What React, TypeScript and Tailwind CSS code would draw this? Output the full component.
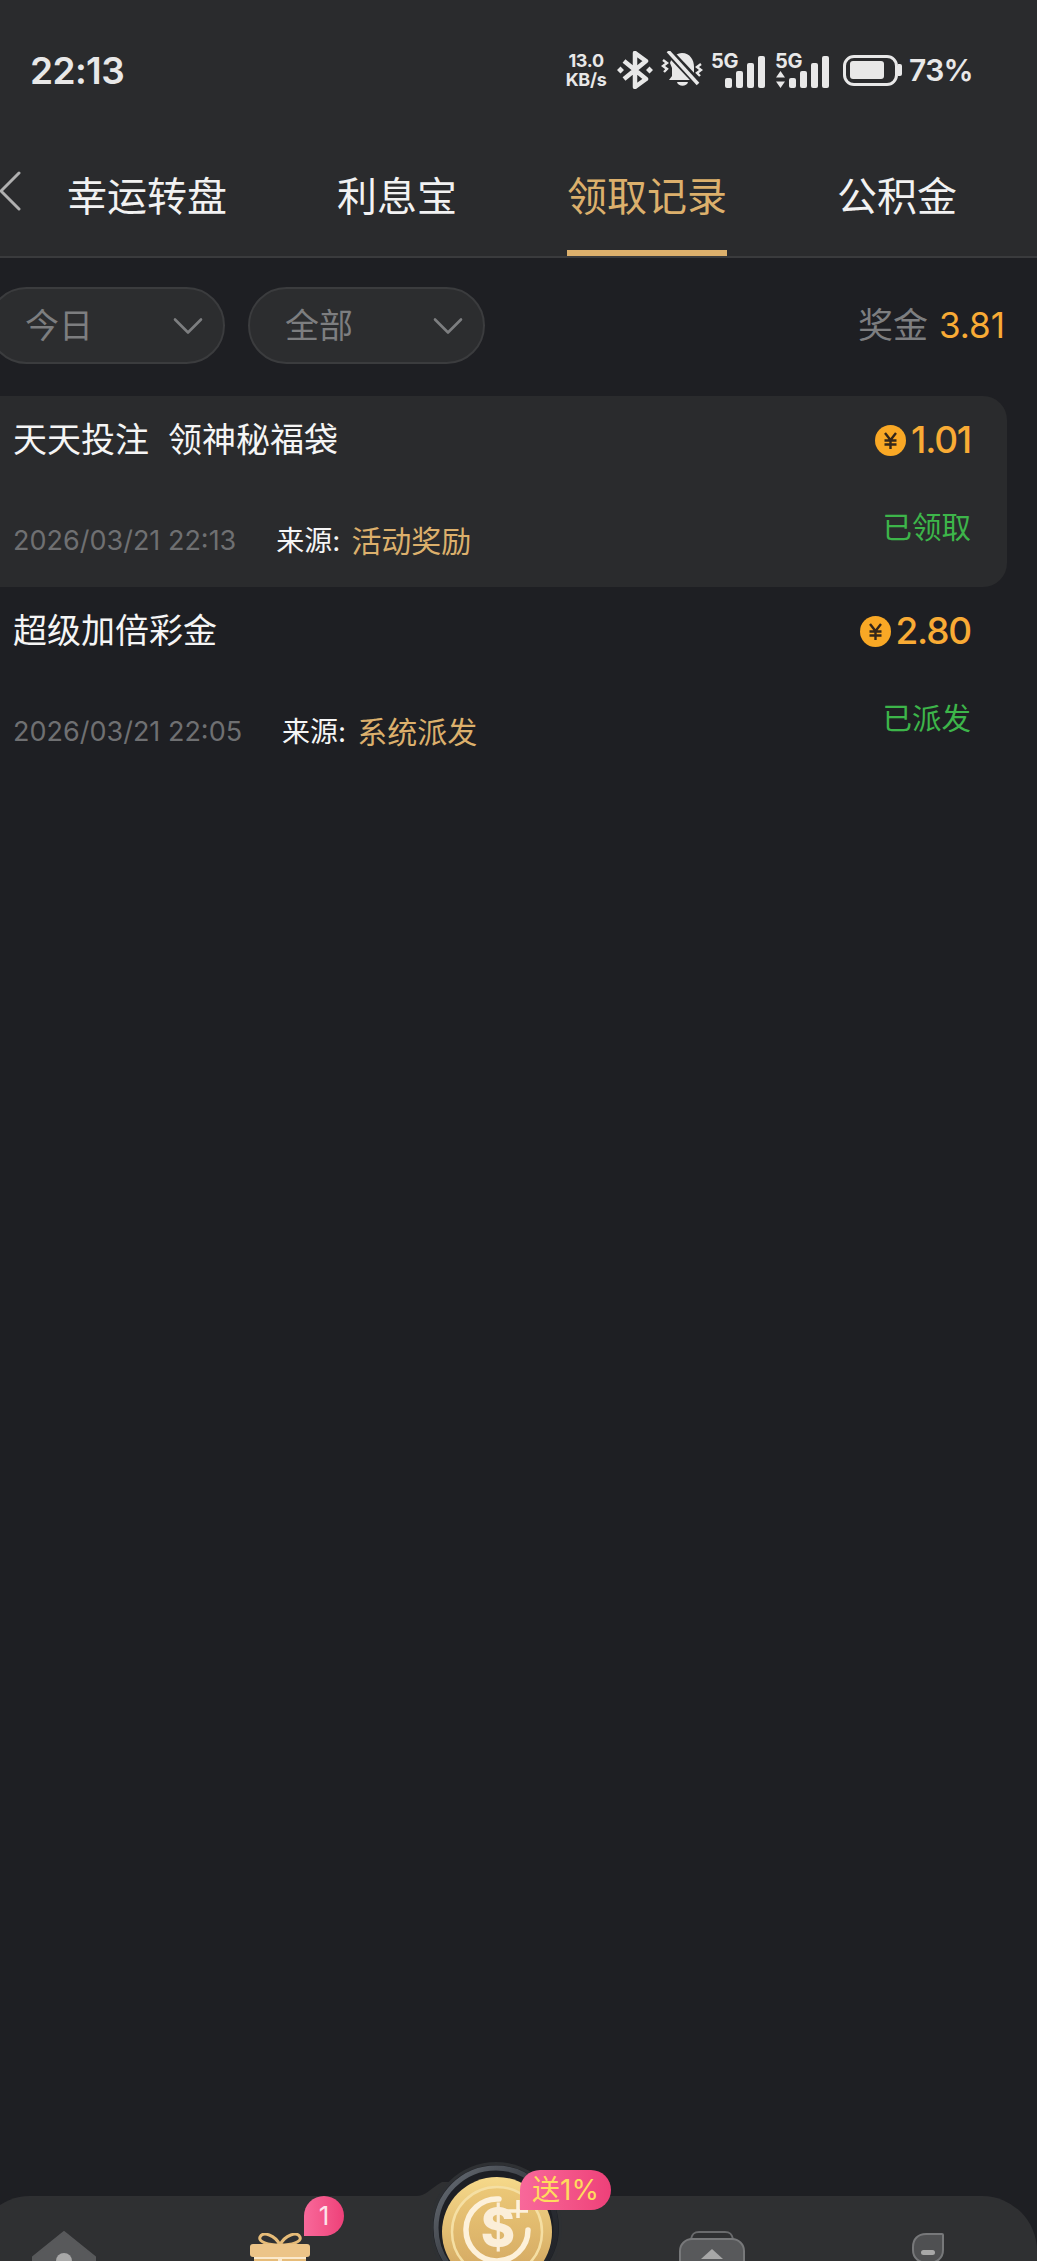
import { ChevronLeft, ChevronDown } from "lucide-react";

const tabs = ["幸运转盘", "利息宝", "领取记录", "公积金"];

const records = [
  {
    title: "天天投注  领神秘福袋",
    amount: "1.01",
    time: "2026/03/21 22:13",
    source: "活动奖励",
    status: "已领取",
    active: true,
  },
  {
    title: "超级加倍彩金",
    amount: "2.80",
    time: "2026/03/21 22:05",
    source: "系统派发",
    status: "已派发",
    active: false,
  },
];

function Bars({ arrows }: { arrows?: boolean }) {
  return (
    <div className="relative h-[35px] w-[54px]">
      <span className="absolute left-0 top-[-4px] text-[20px] leading-[24px] font-bold tracking-[-0.5px] text-[#e8e8e8]">5G</span>
      {arrows && (
        <svg width="9" height="17" viewBox="0 0 9 17" className="absolute left-[1px] bottom-0">
          <path d="M4.5 0L9 6.500H0zM4.5 17L0 10.500h9z" fill="#e8e8e8" />
        </svg>
      )}
      <div className="absolute bottom-0 right-0 flex items-end gap-[4px]">
        <div className="h-[10px] w-[7px] rounded-[2px] bg-[#e8e8e8]" />
        <div className="h-[17px] w-[7px] rounded-[2px] bg-[#e8e8e8]" />
        <div className="h-[25px] w-[7px] rounded-[2px] bg-[#e8e8e8]" />
        <div className="h-[32px] w-[7px] rounded-[2px] bg-[#e8e8e8]" />
      </div>
    </div>
  );
}

function StatusBar() {
  return (
    <div className="flex h-[100px] items-center justify-between pl-[30px] pr-[64px] pt-[40px] text-[#e8e8e8]">
      <span className="text-[37px] font-semibold leading-none tracking-[-0.6px]">22:13</span>
      <div className="flex items-center">
        <div className="flex w-[46px] flex-col items-center text-[18px] font-bold leading-[19px] tracking-[-0.3px]">
          <span>13.0</span>
          <span>KB/s</span>
        </div>
        <svg width="36" height="38" viewBox="0 0 36 38" className="ml-[8px]">
          <path d="M7 10l22 18-11 8V2l11 8-22 18" fill="none" stroke="#e8e8e8" strokeWidth="4.5" strokeLinejoin="round" />
          <path d="M3.5 15.500l3.500 3.500-3.500 3.500L0 19zM32.500 15.500l3.500 3.500-3.500 3.500L29 19z" fill="#e8e8e8" />
        </svg>
        <svg width="42" height="38" viewBox="0 0 42 38" className="ml-[8px]">
          <path d="M9 12c2-6 7-10 12-10 8 0 12 7 12 14v9l3 4H8l3-4v-8z" fill="#e8e8e8" />
          <path d="M16 31h11c-1 5-10 5-11 0z" fill="#e8e8e8" />
          <path d="M7 0l32 34" stroke="#2a2b2d" strokeWidth="8" />
          <path d="M7 0l30 33" stroke="#e8e8e8" strokeWidth="3.500" />
          <path d="M2 9l4 3-4 3 4 3-3 3M40 13l-4 3 4 3-4 3 3 3" fill="none" stroke="#e8e8e8" strokeWidth="2.400" />
        </svg>
        <div className="ml-[8px]">
          <Bars />
        </div>
        <div className="ml-[10px]">
          <Bars arrows />
        </div>
        <div className="ml-[14px] flex items-center">
          <div className="flex h-[31px] w-[55px] items-center rounded-[11px] border-[3px] border-[#e8e8e8] px-[4px]">
            <div className="h-[18px] w-[34px] rounded-[3px] bg-[#e8e8e8]" />
          </div>
          <div className="h-[12px] w-[4px] rounded-r-[2px] bg-[#e8e8e8]" />
        </div>
        <span className="ml-[7px] text-[30px] font-semibold leading-none tracking-[-0.7px]">73%</span>
      </div>
    </div>
  );
}

function Header() {
  return (
    <div className="border-b-2 border-[#3a3b3d] bg-[#2a2b2d]">
      <StatusBar />
      <div className="relative flex h-[156px] pl-[22px] pt-[76px]">
        <ChevronLeft className="absolute left-[-26px] top-[55px] h-[72px] w-[72px] text-[#b0b0b0]" strokeWidth={1} />
        {tabs.map((tab) => (
          <div key={tab} className="flex w-[250px] justify-center">
            <div
              className={`h-[80px] border-b-[6px] text-[40px] leading-[42px] ${
                tab === "领取记录" ? "border-[#dcb06c] text-[#dcb06c]" : "border-transparent text-[#f2f2f2]"
              }`}
            >
              {tab}
            </div>
          </div>
        ))}
      </div>
    </div>
  );
}

function Filter({ label }: { label: string }) {
  return (
    <div className="flex h-[77px] w-[237px] items-center justify-between rounded-full border-2 border-[#3b3c3e] bg-[#2c2d2f] pl-[35px] pr-[9px] text-[34px] text-[#7d7e80]">
      <span>{label}</span>
      <ChevronDown className="h-[52px] w-[52px] text-[#7d7e80]" strokeWidth={1.200} />
    </div>
  );
}

function Coin() {
  return (
    <svg width="31" height="31" viewBox="0 0 31 31">
      <circle cx="15.500" cy="15.500" r="15.500" fill="#f9a825" />
      <path d="M10 8l5.500 7 5.500-7M9.500 15.500h12M9.500 19.500h12M15.500 15v9" fill="none" stroke="#33261a" strokeWidth="2.400" />
    </svg>
  );
}

function RecordRow({ record }: { record: (typeof records)[number] }) {
  return (
    <div
      className={`flex h-[191px] w-[1007px] justify-between rounded-r-[24px] pl-[13px] pr-[36px] pt-[22px] ${
        record.active ? "bg-[#2a2b2d]" : ""
      }`}
    >
      <div>
        <div className="h-[44px] whitespace-pre text-[34px] leading-[44px] text-[#f5f5f5]">{record.title}</div>
        <div className="mt-[57px] flex h-[44px] items-center text-[28px]">
          <span className="text-[27px] text-[#6f7072]">{record.time}</span>
          <span className="ml-[40px] text-[#f5f5f5]">来源:</span>
          <span className="ml-[11px] text-[30px] text-[#dcb06c]">{record.source}</span>
        </div>
      </div>
      <div className="flex flex-col items-end">
        <div className="flex h-[44px] items-center gap-[5px] text-[37px] font-medium tracking-[-1.200px] text-[#f9ab35]">
          <Coin />
          <span>{record.amount}</span>
        </div>
        <div className="mt-[43px] h-[44px] text-[29.500px] leading-[44px] text-[#3db54a]">{record.status}</div>
      </div>
    </div>
  );
}

function BottomNav() {
  return (
    <div className="relative -ml-[25px] mt-auto h-[65px] w-[1062px] rounded-t-[55px] bg-[#2f3032]">
      <div className="-ml-[19px] grid grid-cols-[repeat(5,216px)]">
        <div className="relative flex justify-center pt-[35px]">
          <svg width="66" height="50" viewBox="0 0 66 50">
            <path d="M33 1l31 25v24H2V26z" fill="#58595b" stroke="#58595b" strokeWidth="2" strokeLinejoin="round" />
            <circle cx="33" cy="30" r="8" fill="#a8a8a8" />
          </svg>
        </div>
        <div className="relative flex justify-center pt-[37px]">
          <svg width="62" height="40" viewBox="0 0 62 40">
            <path d="M31 12C26 2 14-2 11 4c-2 5 8 8 20 8zM31 12c5-10 17-14 20-8 2 5-8 8-20 8z" fill="none" stroke="#e6bb78" strokeWidth="3" />
            <rect x="1" y="11" width="60" height="13" rx="3" fill="#ecc488" />
            <rect x="5" y="24" width="52" height="2" fill="#fbe9cc" />
            <rect x="5" y="26" width="52" height="20" fill="#e6bb78" />
            <rect x="29" y="24" width="4" height="20" fill="#fbe9cc" />
          </svg>
          <div className="absolute left-[132px] top-0 flex h-[40px] w-[40px] items-center justify-center rounded-full rounded-bl-[4px] bg-linear-to-r from-[#f8689a] to-[#ee4079] text-[26px] leading-none text-[#fde2ea]">
            1
          </div>
        </div>
        <div className="relative">
          <svg width="240" height="99" viewBox="0 0 240 99" className="absolute left-[-12px] top-[-34px]">
            <defs>
              <linearGradient id="ring" x1="0" y1="0" x2="1" y2="1">
                <stop offset="0" stopColor="#6a7078" />
                <stop offset="0.6" stopColor="#2a2d33" />
                <stop offset="1" stopColor="#1d1f24" />
              </linearGradient>
              <linearGradient id="gold" x1="0" y1="0" x2="0" y2="1">
                <stop offset="0" stopColor="#f6d98a" />
                <stop offset="1" stopColor="#cda05a" />
              </linearGradient>
              <linearGradient id="goldInner" x1="0" y1="0" x2="0" y2="1">
                <stop offset="0" stopColor="#ecc877" />
                <stop offset="1" stopColor="#d3a862" />
              </linearGradient>
            </defs>
            <path d="M40 34C50 34 55 26 66 20h108c11 6 16 14 26 14z" fill="#2f3032" />
            <circle cx="120" cy="66" r="66" fill="#2e3033" />
            <circle cx="120" cy="66" r="63" fill="#1d1f24" />
            <circle cx="120" cy="66" r="60" fill="none" stroke="url(#ring)" strokeWidth="5" />
            <circle cx="121" cy="70" r="55" fill="url(#gold)" />
            <circle cx="121" cy="70" r="45" fill="url(#goldInner)" stroke="#f5dfa3" strokeWidth="2.500" />
            <path d="M123 37A31 31 0 1 0 152 68" fill="none" stroke="#fdf1da" strokeWidth="5.500" strokeLinecap="round" />
            <path d="M131 49h21M142 38v18" stroke="#fdf1da" strokeWidth="3.500" />
            <text x="122" y="84" textAnchor="middle" fontSize="52" fontWeight="800" fill="#fbeed8">$</text>
          </svg>
          <div className="absolute left-[132px] top-[-26px] flex h-[40px] w-[91px] items-center justify-center rounded-full rounded-bl-none bg-linear-to-r from-[#f8689a] to-[#ee4079] text-[28px] leading-none text-[#ffdb5e]">
            送1%
          </div>
        </div>
        <div className="relative flex justify-center pt-[35px]">
          <svg width="66" height="40" viewBox="0 0 66 40">
            <path d="M12 8c1-5 3-7 8-7h26c5 0 7 2 8 7" fill="none" stroke="#6a6b6d" strokeWidth="2" />
            <rect x="1" y="8" width="64" height="40" rx="12" fill="#58595b" stroke="#77787a" strokeWidth="2" />
            <path d="M33 18l11 10H22z" fill="#a8a8a8" />
          </svg>
        </div>
        <div className="relative flex justify-center pt-[37px]">
          <svg width="32" height="30" viewBox="0 0 32 30">
            <path d="M14 1h16a1 1 0 0 1 1 1v15c0 8-6 13-15 13S1 25 1 17V14C1 6 6 1 14 1z" fill="#4f5052" stroke="#77787a" strokeWidth="2" />
            <rect x="9" y="17" width="14" height="5" rx="2.500" fill="#a8a8a8" />
          </svg>
        </div>
      </div>
    </div>
  );
}

export default function App() {
  return (
    <div className="flex h-[2261px] w-[1037px] flex-col overflow-hidden bg-[#1e1f23] [font-family:Inter,'Noto_Sans_CJK_SC',sans-serif]">
      <Header />
      <div className="flex items-center justify-between pr-[32px] pt-[29px]">
        <div className="-ml-[12px] flex gap-[23px]">
          <Filter label="今日" />
          <Filter label="全部" />
        </div>
        <div className="flex items-center gap-[11px] text-[35px]">
          <span className="text-[#7d7e80]">奖金</span>
          <span className="text-[#f9ab35]">3.81</span>
        </div>
      </div>
      <div className="mt-[32px]">
        {records.map((record) => (
          <RecordRow key={record.amount} record={record} />
        ))}
      </div>
      <BottomNav />
    </div>
  );
}
